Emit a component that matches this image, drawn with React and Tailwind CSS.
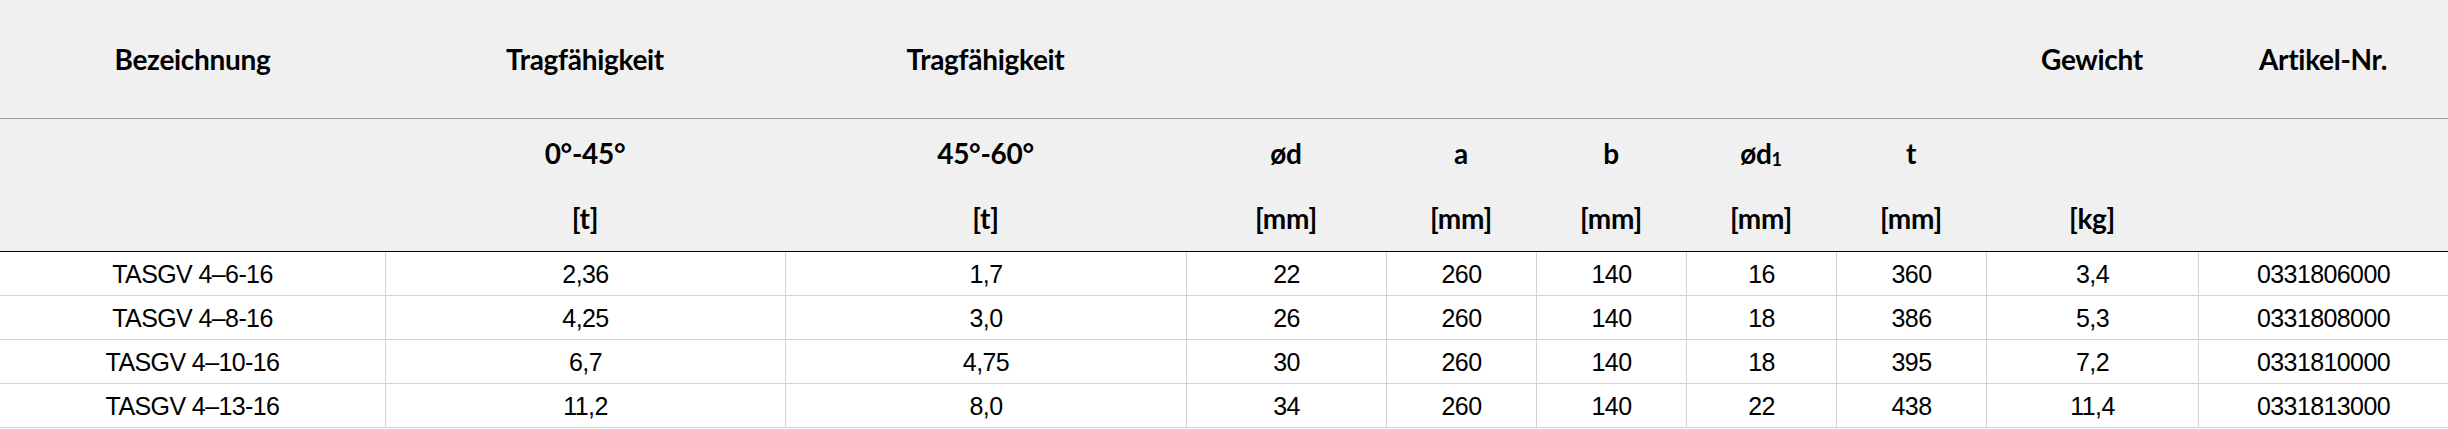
import React from "react";

const widths = ["w-[385px]", "w-[400px]", "w-[401px]", "w-[200px]", "w-[150px]", "w-[150px]", "w-[150px]", "w-[150px]", "w-[212px]", "w-[250px]"];

const head1 = ["Bezeichnung", "Tragfähigkeit", "Tragfähigkeit", "", "", "", "", "", "Gewicht", "Artikel-Nr."];
const head2a = ["", "0°-45°", "45°-60°", "ød", "a", "b", "ød1", "t", "", ""];
const head2b = ["", "[t]", "[t]", "[mm]", "[mm]", "[mm]", "[mm]", "[mm]", "[kg]", ""];

const rows = [
  ["TASGV 4–6-16", "2,36", "1,7", "22", "260", "140", "16", "360", "3,4", "0331806000"],
  ["TASGV 4–8-16", "4,25", "3,0", "26", "260", "140", "18", "386", "5,3", "0331808000"],
  ["TASGV 4–10-16", "6,7", "4,75", "30", "260", "140", "18", "395", "7,2", "0331810000"],
  ["TASGV 4–13-16", "11,2", "8,0", "34", "260", "140", "22", "438", "11,4", "0331813000"],
];

function HeadText({ t }) {
  if (t === "ød1") {
    return (
      <span>
        ød<sub className="text-[0.65em] relative top-[0.15em] align-baseline">1</sub>
      </span>
    );
  }
  return <span>{t}</span>;
}

export default function App() {
  return (
    <div className="w-[2448px] h-[429px] bg-white overflow-hidden text-black">
      <div className="bg-[#f0f0f0] font-['Lato',sans-serif] font-bold text-[28px] tracking-[-0.3px]">
        <div className="flex h-[119px] border-b border-[#a0a0a0]">
          {head1.map((t, i) => (
            <div key={i} className={`${widths[i]} shrink-0 flex items-center justify-center`}>
              {t}
            </div>
          ))}
        </div>
        <div className="flex h-[133px] border-b border-black">
          {head2a.map((t, i) => (
            <div key={i} className={`${widths[i]} shrink-0 flex flex-col`}>
              <div className="h-[66px] flex items-center justify-center pt-[1px]">
                <HeadText t={t} />
              </div>
              <div className="h-[66px] flex items-center justify-center">{head2b[i]}</div>
            </div>
          ))}
        </div>
      </div>
      <div className="font-['Liberation_Sans',Arial,sans-serif] text-[25px] tracking-[-0.6px]">
        {rows.map((r, ri) => (
          <div key={ri} className="flex h-[44px] border-b border-[#d3d3d3]">
            {r.map((c, ci) => (
              <div
                key={ci}
                className={`${widths[ci]} shrink-0 flex items-center justify-center pt-[3px] ${ci > 0 ? "border-l border-[#d3d3d3]" : ""}`}
              >
                {c}
              </div>
            ))}
          </div>
        ))}
      </div>
    </div>
  );
}
